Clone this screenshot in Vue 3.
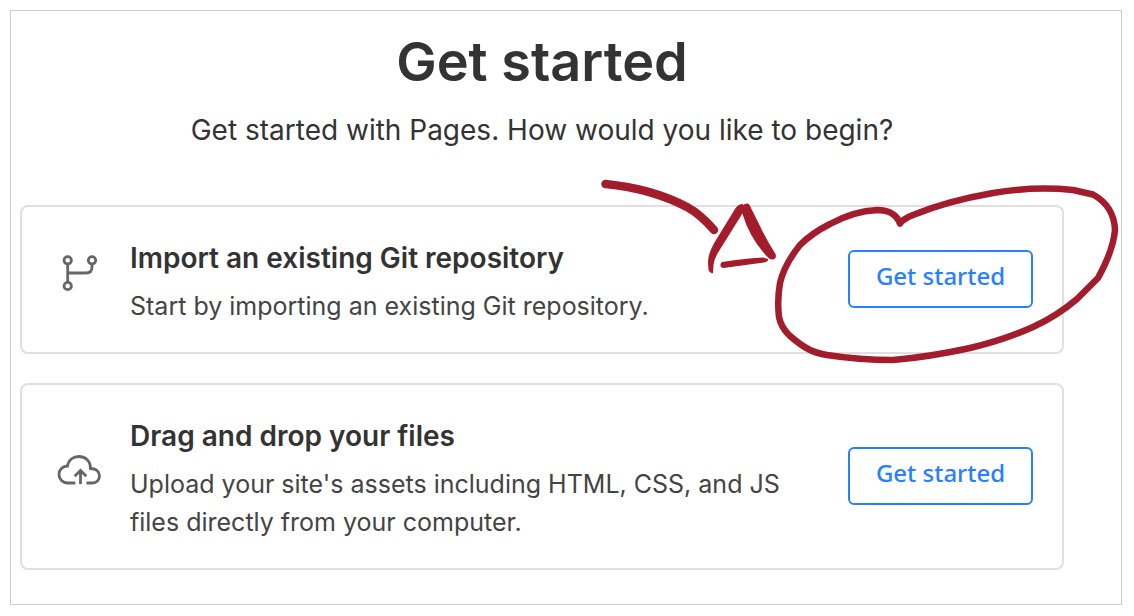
<template>
  <main class="page">
    <header class="intro">
      <h1>Get started</h1>
      <p>Get started with Pages. How would you like to begin?</p>
    </header>

    <section v-for="option in options" :key="option.key" class="card">
      <svg v-if="option.key === 'git'" class="icon" viewBox="0 0 44 44" aria-hidden="true">
        <circle cx="10.7" cy="9.3" r="3.7" />
        <circle cx="35" cy="9.3" r="3.7" />
        <circle cx="10.7" cy="35" r="3.7" />
        <path d="M10.7 13v18.3M10.7 22h18.3q6 0 6-6v-3" />
      </svg>
      <svg v-else class="icon" viewBox="0 0 44 44" aria-hidden="true">
        <path d="M18.3 35H11C5.600 35 2 31 2 26.500C2 21.700 5.500 18 10.500 18C11.500 12 16 8.500 22 8.500C28.500 8.500 33.500 13 33.500 20.500C39 20.500 42.500 23.500 42.500 28C42.500 32 39.500 35 35.500 35H29.500" />
        <path d="M23.500 36V22.500M17.700 28.300l5.800-5.800 5.800 5.800" />
      </svg>

      <div class="text">
        <h2>{{ option.title }}</h2>
        <p>{{ option.description }}</p>
      </div>

      <button type="button" class="start-btn">Get started</button>

      <!-- hand-drawn arrow and loop around the button -->
      <svg v-if="option.key === 'git'" class="marker" viewBox="590 170 530 200" aria-hidden="true">
        <path class="stroke arrow" d="M605.500 184C636 187 666 196 687 207Q700 214 714 230" />
        <path d="M743 204Q738 204 735 209L716 240Q708 253 708 262L708.500 270Q710 274 713 273L713.500 265Q714 259 719 251L744 211Z" />
        <path d="M742.500 206Q744 203 748 203.500Q750 204.500 751 208L760 226Q766 239 775.500 254Q777 258 773.500 259.500Q770 260 768 257.500Q750 239 742.500 214Z" />
        <path d="M722 262Q719.500 264 721 267Q723 268.500 727 267.500L764 262.500Q769 261 768 259L763 257.500Q747 258 722 262Z" />
        <path
          class="stroke loop"
          d="M900 223.500Q895 210 877 210Q854 211 830 224Q812 233 800 245Q784 265 780 283Q777 300 779 317Q781 327 789 335Q800 345 810 350Q816 353 827 355Q859 360 893 360Q929 357 970 348Q1004 340 1033 327Q1057 316 1077 299L1098 278Q1113 251 1115 230Q1114 206 1093 194.500L1073 190Q1034 186 993 193Q947 201 913 215Q903 219 900 223.500"
        />
      </svg>
    </section>
  </main>
</template>

<script setup>
const options = [
  {
    key: 'git',
    title: 'Import an existing Git repository',
    description: 'Start by importing an existing Git repository.'
  },
  {
    key: 'upload',
    title: 'Drag and drop your files',
    description: "Upload your site's assets including HTML, CSS, and JS files directly from your computer."
  }
]
</script>

<style>
body {
  margin: 0;
  background: #fff;
}
</style>

<style scoped>
.page {
  margin: 10px 12px 10px 10px;
  padding: 20px 57px 34px 9px;
  border: 1px solid #ccc;
  font-family: Inter, "Liberation Sans", sans-serif;
  color: #333;
}

h1,
h2,
p {
  margin: 0;
}

.intro {
  margin-bottom: 56px;
  text-align: center;
}

.intro h1 {
  font-size: 54px;
  line-height: 62px;
  font-weight: 600;
}

.intro p {
  margin-top: 18px;
  font-size: 28px;
  line-height: 38px;
}

.card {
  position: relative;
  display: flex;
  align-items: center;
  padding: 32px 29px 27px 35px;
  border: 2px solid #e0e0e0;
  border-radius: 8px;
}

.card + .card {
  margin-top: 29px;
}

.icon {
  flex: none;
  width: 44px;
  height: 44px;
  margin-right: 29px;
  margin-bottom: 18px;
  fill: none;
  stroke: #666;
  stroke-width: 2.8;
}

.text {
  flex: 1;
}

.text h2 {
  margin-bottom: 10px;
  font-size: 28px;
  line-height: 38px;
  font-weight: 600;
}

.text p {
  max-width: 660px;
  font-size: 25px;
  line-height: 38px;
  color: #444;
}

.start-btn {
  flex: none;
  width: 185px;
  height: 58px;
  margin-bottom: 6px;
  padding: 0 0 7px;
  border: 2px solid #2680ff;
  border-radius: 6px;
  background: #fff;
  color: #2680ff;
  font-family: "Noto Sans", sans-serif;
  font-size: 24px;
  font-weight: 500;
  cursor: pointer;
}

.marker {
  position: absolute;
  top: -37px;
  right: -58px;
  width: 530px;
  height: 200px;
  fill: #a31c2c;
  pointer-events: none;
}

.stroke {
  fill: none;
  stroke: #a31c2c;
  stroke-linecap: round;
  stroke-linejoin: round;
}

.arrow {
  stroke-width: 8.5;
}

.loop {
  stroke-width: 6.5;
}
</style>
